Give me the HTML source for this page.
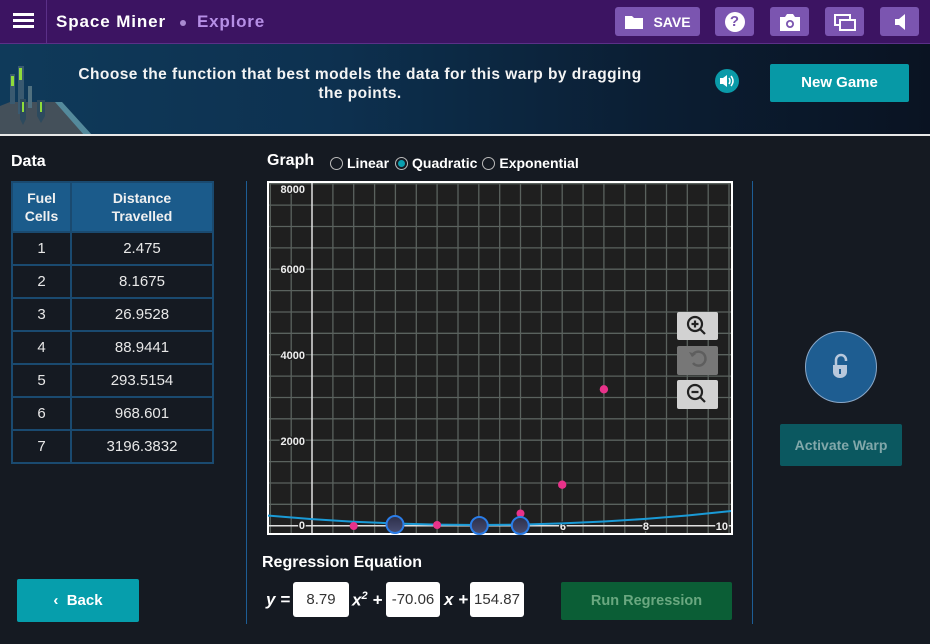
<!DOCTYPE html>
<html><head><meta charset="utf-8">
<style>
*{margin:0;padding:0;box-sizing:border-box}
body{width:930px;height:644px;overflow:hidden;background:#151a22;font-family:"Liberation Sans",sans-serif;color:#fff;position:relative}
.a{position:absolute}
.top{left:0;top:0;width:930px;height:44px;background:#3c1462;border-bottom:1px solid #5b3088}
.tb{background:#7b55b0;border-radius:3px;top:7px;height:29px;display:flex;align-items:center;justify-content:center}
.banner{left:0;top:44px;width:930px;height:91px;background:linear-gradient(90deg,#0f3a5a 0%,#0d3150 35%,#0b1e33 70%,#0a1322 100%)}
table{border-collapse:collapse}
td,th{border:2px solid #1a4a70;text-align:center}
th{background:#1b5b8b;font-weight:bold;font-size:14px;line-height:18px;height:50px;color:#f0f0f0}
td{height:33px;font-size:15px;color:#e8e8e8}
.inp{background:#fff;border-radius:3px;color:#333;font-size:15px;top:582px;height:35px;display:flex;align-items:center;justify-content:center}
.eq{font-weight:bold;font-style:italic;font-size:17px;top:590px}
</style></head><body>
<div class="a top"></div>
<div class="a" style="left:46px;top:0;width:1px;height:44px;background:#5b3088"></div>
<div class="a" style="left:13px;top:13px;width:21px;height:3px;background:#fff;box-shadow:0 6px 0 #fff,0 12px 0 #fff"></div>
<div class="a" style="left:56px;top:12px;font-size:17px;font-weight:bold;color:#fff;letter-spacing:.9px">Space Miner</div>
<div class="a" style="left:180px;top:20px;width:6px;height:6px;border-radius:50%;background:#a98ad0"></div>
<div class="a" style="left:197px;top:12px;font-size:17px;font-weight:bold;color:#b68fe6;letter-spacing:.8px">Explore</div>
<div class="a tb" style="left:615px;width:85px">
<svg width="20" height="16" viewBox="0 0 20 16"><path d="M1 2h7l2 2h9v11H1z" fill="#fff"/></svg>
<span style="font-weight:bold;font-size:14px;margin-left:9px">SAVE</span></div>
<div class="a tb" style="left:715px;width:39px"><div style="width:20px;height:20px;border-radius:50%;background:#fff;color:#7b55b0;font-weight:bold;font-size:15px;text-align:center;line-height:20px">?</div></div>
<div class="a tb" style="left:770px;width:39px"><svg width="24" height="20" viewBox="0 0 24 20"><path d="M2 5h5l2-3h6l2 3h5v14H2z" fill="#fff"/><circle cx="12" cy="12" r="4" fill="#7b55b0"/><circle cx="12" cy="12" r="2.2" fill="#fff"/></svg></div>
<div class="a tb" style="left:825px;width:39px"><svg width="24" height="20" viewBox="0 0 24 20"><rect x="2" y="3" width="15" height="10" fill="none" stroke="#fff" stroke-width="2"/><rect x="7" y="8" width="15" height="10" fill="#7b55b0" stroke="#fff" stroke-width="2"/></svg></div>
<div class="a tb" style="left:880px;width:39px"><svg width="14" height="18" viewBox="0 0 14 18"><path d="M2 6h4l6-5v16l-6-5H2z" fill="#fff"/></svg></div>

<div class="a banner"></div>
<svg class="a" style="left:0;top:44px" width="100" height="91" viewBox="0 0 100 91">
<path d="M0 62 L10 58 L62 58 L92 91 L0 91z" fill="#44505a"/>
<path d="M55 58 L62 58 L92 91 L84 91z" fill="#5fb0c8" opacity=".6"/>
<rect x="10" y="30" width="5" height="30" fill="#3a5a70"/><rect x="11" y="32" width="3" height="10" fill="#8fdc3a"/>
<rect x="18" y="22" width="6" height="48" fill="#3a5a70"/><rect x="19" y="24" width="3" height="12" fill="#8fdc3a"/>
<rect x="28" y="42" width="4" height="22" fill="#50707f"/>
<path d="M20 55h6v20l-3 6-3-6z" fill="#2d4a5e"/><rect x="22" y="58" width="2" height="10" fill="#8fdc3a"/>
<path d="M37 56h8v16l-4 7-4-7z" fill="#2d4a5e"/><rect x="40" y="58" width="2" height="10" fill="#8fdc3a"/>
</svg>
<div class="a" style="left:0;top:134px;width:930px;height:2px;background:#e8e8e8"></div>
<div class="a" style="left:40px;top:65px;width:640px;text-align:center;font-size:15.5px;font-weight:bold;line-height:19px;color:#f4f4f4;letter-spacing:.45px;white-space:nowrap">Choose the function that best models the data for this warp by dragging<br>the points.</div>
<div class="a" style="left:715px;top:69px;width:24px;height:24px;border-radius:50%;background:#0a9aa8"></div>
<svg class="a" style="left:718px;top:73px" width="18" height="16" viewBox="0 0 18 16"><path d="M2 5h3l4-3v12l-4-3H2z" fill="#fff"/><path d="M11 5q2 3 0 6M13 3q4 5 0 10" stroke="#fff" stroke-width="1.5" fill="none"/></svg>
<div class="a" style="left:770px;top:64px;width:139px;height:38px;background:#0799a6;border-radius:2px;text-align:center;line-height:38px;font-weight:bold;font-size:15px">New Game</div>

<div class="a" style="left:11px;top:153px;font-size:16px;font-weight:bold">Data</div>
<table class="a" style="left:11px;top:181px;width:203px">
<tr><th style="width:59px">Fuel<br>Cells</th><th>Distance<br>Travelled</th></tr>
<tr><td>1</td><td>2.475</td></tr>
<tr><td>2</td><td>8.1675</td></tr>
<tr><td>3</td><td>26.9528</td></tr>
<tr><td>4</td><td>88.9441</td></tr>
<tr><td>5</td><td>293.5154</td></tr>
<tr><td>6</td><td>968.601</td></tr>
<tr><td>7</td><td>3196.3832</td></tr>
</table>
<div class="a" style="left:246px;top:181px;width:1px;height:443px;background:#1d5d95"></div>
<div class="a" style="left:752px;top:181px;width:1px;height:443px;background:#1d5d95"></div>

<div class="a" style="left:267px;top:152px;font-size:16px;font-weight:bold">Graph</div>
<div class="a" style="left:330px;top:155px;font-size:14px;font-weight:bold;display:flex;align-items:center;white-space:nowrap">
<span style="width:13px;height:13px;border:1px solid #bbb;border-radius:50%;display:inline-block;margin-right:4px"></span>Linear
<span style="width:13px;height:13px;border:1px solid #bbb;border-radius:50%;display:inline-flex;align-items:center;justify-content:center;margin:0 4px 0 6px"><span style="width:7px;height:7px;border-radius:50%;background:#0aa0b0"></span></span>Quadratic
<span style="width:13px;height:13px;border:1px solid #bbb;border-radius:50%;display:inline-block;margin:0 4px 0 5px"></span>Exponential</div>

<svg class="a" style="left:267px;top:181px" width="466" height="354" viewBox="267 181 466 354">
<rect x="267" y="181" width="466" height="354" fill="#fff"/>
<rect x="269" y="183" width="462" height="350" fill="#1f1f1f"/>
<g stroke="#5a625e" stroke-width="1.3">
<path d="M270.3 183V533M291.2 183V533M332.9 183V533M353.7 183V533M374.6 183V533M395.4 183V533M416.3 183V533M437.1 183V533M458 183V533M478.8 183V533M499.7 183V533M520.5 183V533M541.4 183V533M562.2 183V533M583.1 183V533M603.9 183V533M624.8 183V533M645.6 183V533M666.5 183V533M687.3 183V533M708.2 183V533M729 183V533"/>
<path d="M269 504.3H731M269 483H731M269 461.6H731M269 440.2H731M269 418.8H731M269 397.5H731M269 376.1H731M269 354.7H731M269 333.3H731M269 312H731M269 290.6H731M269 269.2H731M269 247.9H731M269 226.5H731M269 205.1H731M269 183.7H731"/>
</g>
<path d="M312 183V533M269 525.7H731" stroke="#e0e0e0" stroke-width="1.5"/>
<g font-family="Liberation Sans" font-weight="bold" font-size="11" fill="#eee" stroke="#1f1f1f" stroke-width="2.5" paint-order="stroke" text-anchor="end">
<text x="305" y="193">8000</text><text x="305" y="273">6000</text><text x="305" y="359">4000</text><text x="305" y="445">2000</text><text x="305" y="529">0</text>
<text x="566" y="530">6</text><text x="649" y="530">8</text><text x="728" y="530">10</text>
</g>
<path d="M268 515.6 L270.3 515.7 L312 519.1 L353.7 521.7 L395.4 523.5 L437.1 524.6 L478.8 525 L520.5 524.6 L562.2 523.4 L603.9 521.5 L645.6 518.9 L687.3 515.5 L729 511.3 L731 511" fill="none" stroke="#1a9ad6" stroke-width="2"/>
<g fill="#e8328a"><circle cx="353.7" cy="526" r="4"/><circle cx="437.1" cy="525" r="4"/><circle cx="520.5" cy="513.5" r="4"/><circle cx="562.2" cy="484.7" r="4.2"/><circle cx="603.9" cy="389.3" r="4.2"/></g>
<defs><linearGradient id="g" x1="0" y1="0" x2="0" y2="1"><stop offset="0" stop-color="#2c2f4a"/><stop offset="1" stop-color="#4a4e72"/></linearGradient></defs>
<g fill="url(#g)" stroke="#2a7de8" stroke-width="2"><circle cx="395" cy="524.5" r="8.5"/><circle cx="479.3" cy="525.5" r="8.5"/><circle cx="520.3" cy="525.5" r="8.5"/></g>
<rect x="677" y="312" width="41" height="28" rx="2" fill="#d2d2d2"/>
<rect x="677" y="346" width="41" height="29" rx="2" fill="#777"/>
<rect x="677" y="380" width="41" height="29" rx="2" fill="#d2d2d2"/>
<g stroke="#222" stroke-width="2.2" fill="none"><circle cx="695" cy="324" r="7"/><path d="M700 329l5 5M691.5 324h7M695 320.5v7"/><circle cx="695" cy="392" r="7"/><path d="M700 397l5 5M691.5 392h7"/></g>
<path d="M692 356a7 7 0 1 1 1 7" stroke="#5e5e5e" stroke-width="2.5" fill="none"/><path d="M689 352l3 5 4-3z" fill="#5e5e5e"/>
</svg>

<div class="a" style="left:262px;top:554px;font-size:16px;font-weight:bold">Regression Equation</div>
<div class="a eq" style="left:266px">y =</div>
<div class="a inp" style="left:293px;width:56px">8.79</div>
<div class="a eq" style="left:352px">x<sup style="font-size:11px">2</sup> +</div>
<div class="a inp" style="left:386px;width:54px">-70.06</div>
<div class="a eq" style="left:444px">x +</div>
<div class="a inp" style="left:470px;width:54px">154.87</div>
<div class="a" style="left:561px;top:582px;width:171px;height:38px;background:#0b5e36;border-radius:2px;text-align:center;line-height:38px;font-weight:bold;font-size:14.5px;color:#6aa880">Run Regression</div>
<div class="a" style="left:17px;top:579px;width:122px;height:43px;background:#069eac;border-radius:2px;text-align:center;line-height:43px;font-weight:bold;font-size:15px">&#8249;&nbsp; Back</div>

<div class="a" style="left:805px;top:331px;width:72px;height:72px;border-radius:50%;background:#1e5d91;border:1px solid #8aa8c8"></div>
<svg class="a" style="left:830px;top:352px" width="22" height="28" viewBox="0 0 22 28"><path d="M6 13V8a5 5 0 0 1 10 0v1" stroke="#b8c8dc" stroke-width="2.5" fill="none"/><path d="M3 13h14v7a7 6 0 0 1-14 0z" fill="#b8c8dc"/><path d="M10 17v5" stroke="#1e5d91" stroke-width="2"/></svg>
<div class="a" style="left:780px;top:424px;width:122px;height:42px;background:#0b5860;border-radius:2px;text-align:center;line-height:42px;font-weight:bold;font-size:14px;color:#82a8aa">Activate Warp</div>
</body></html>
